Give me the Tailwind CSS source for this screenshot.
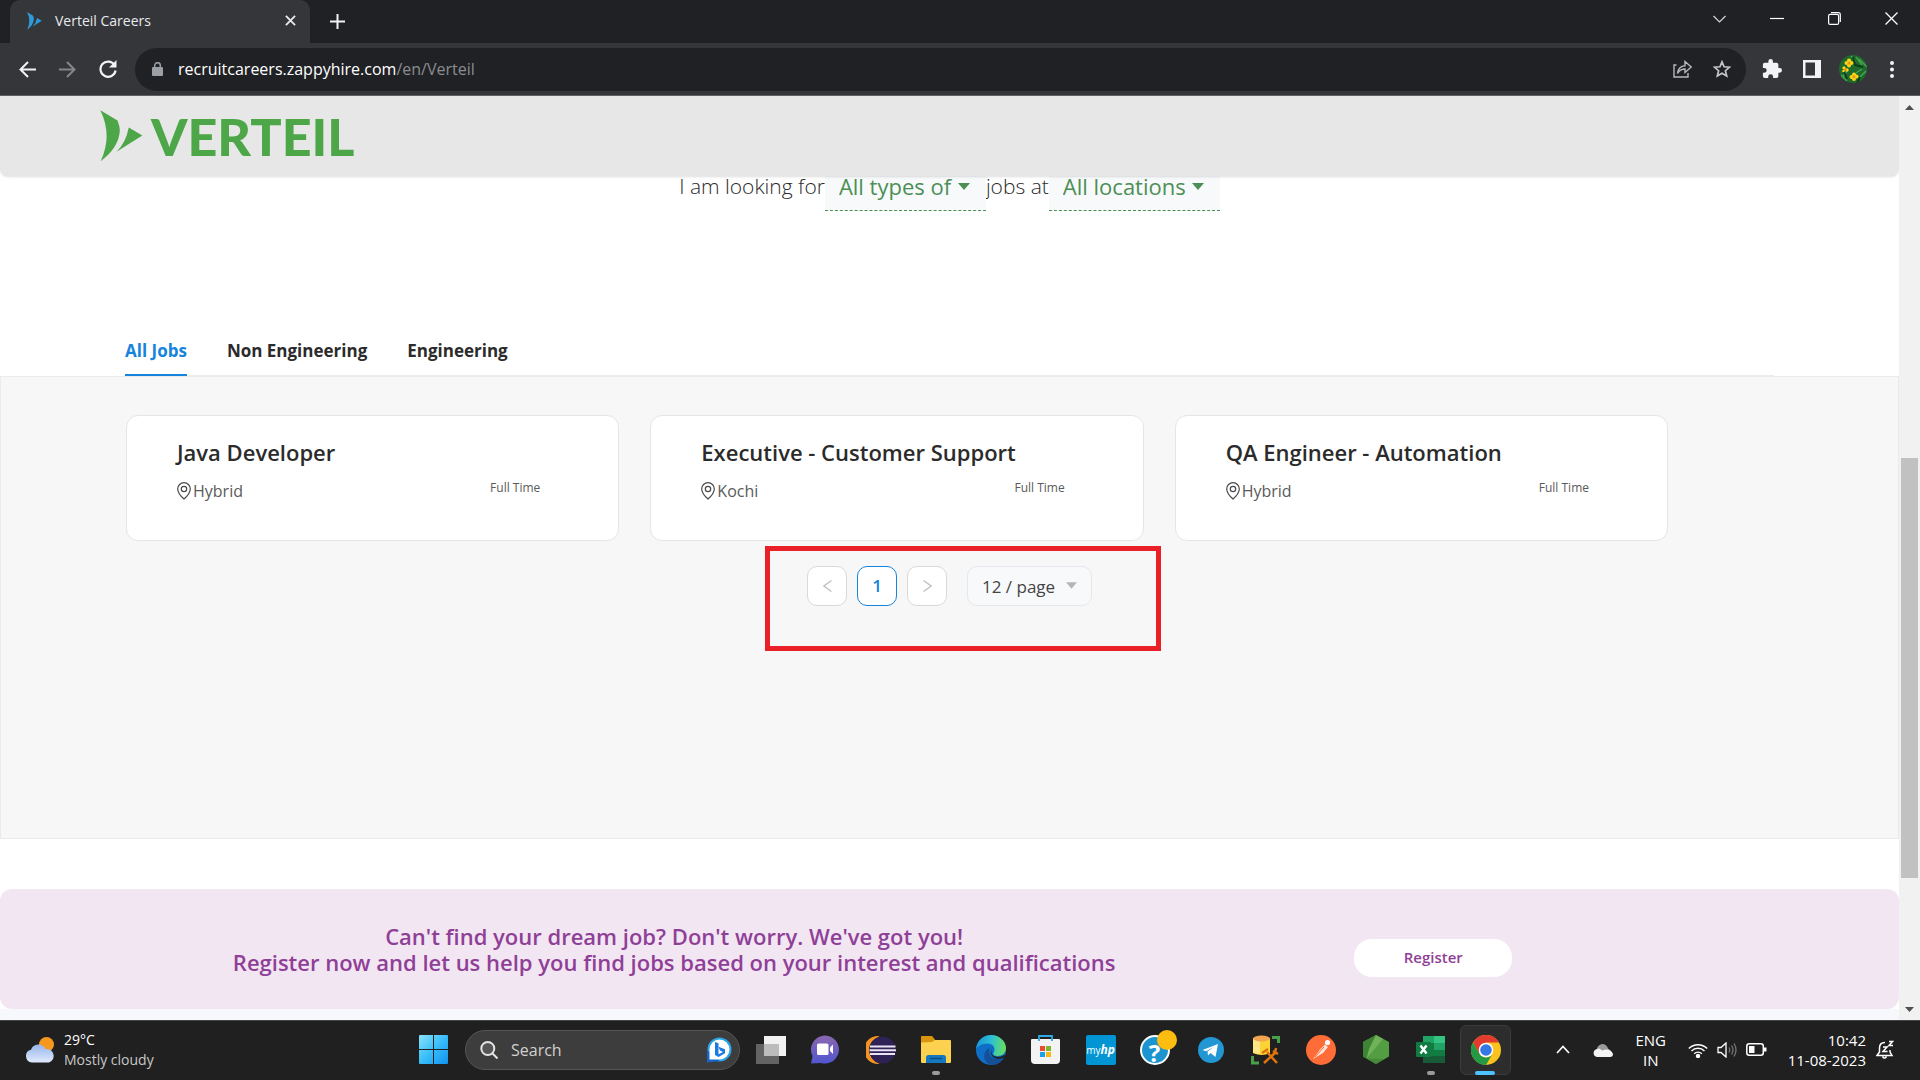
<!DOCTYPE html>
<html lang="en">
<head>
<meta charset="utf-8">
<meta name="viewport" content="width=device-width, initial-scale=1">
<title>Verteil Careers</title>
<script src="https://cdn.jsdelivr.net/npm/@tailwindcss/browser@4"></script>
</head>
<body class="flex h-screen flex-col overflow-hidden bg-white font-['Open_Sans','Noto_Sans',sans-serif] text-[#2b2b2b]">

<!-- Browser chrome -->
<div class="flex h-[43px] shrink-0 items-end bg-[#202124] pl-[10px]">
  <div class="relative flex h-[43px] w-[300px] items-center rounded-t-[10px] bg-[#35363a] pr-[12px] pb-[2px] pl-[17px]">
    <svg class="h-[18px] w-[15px] shrink-0" viewBox="300 330 130 157" preserveAspectRatio="none" fill="#2d9bdb"><path d="M301 331 353 362Q360 380 360 392C358 430 335 460 302 485Q320 445 320 410 320 370 301 331Z"/><path d="M387 383 428 407 350 456Q378 430 387 383Z"/></svg>
    <span class="ml-[13px] flex-1 text-sm text-[#e8eaed]">Verteil Careers</span>
    <button aria-label="Close tab" class="grid size-4 place-items-center"><svg class="size-[11px]" viewBox="0 0 12 12" stroke="#e8eaed" stroke-width="2"><path d="M1 1l10 10M11 1 1 11"/></svg></button>
  </div>
  <button aria-label="New tab" class="ml-5 grid h-[43px] w-[15px] place-items-center"><svg class="size-[15px]" viewBox="0 0 15 15" stroke="#f1f3f4" stroke-width="2"><path d="M7.500 0v15M0 7.500h15"/></svg></button>
  <div class="ml-auto flex h-[37px] items-center gap-11 self-start pr-[22px]">
    <button aria-label="Search tabs"><svg class="h-[8px] w-[13px]" viewBox="0 0 13 8" fill="none" stroke="#d5d6d8" stroke-width="1.200"><path d="m.5 1 6 6 6-6"/></svg></button>
    <button aria-label="Minimize"><svg class="h-[13px] w-[14px]" viewBox="0 0 14 13" stroke="#fff" stroke-width="1.200"><path d="M0 6.500h14"/></svg></button>
    <button aria-label="Restore"><svg class="size-[13px]" viewBox="0 0 13 13" fill="none" stroke="#fff" stroke-width="1.200"><rect x=".6" y="2.400" width="10" height="10" rx="1.500"/><path d="M3 .7h7.300a2 2 0 0 1 2 2V10"/></svg></button>
    <button aria-label="Close"><svg class="size-[13px]" viewBox="0 0 13 13" stroke="#fff" stroke-width="1.300"><path d="m.5.5 12 12M12.500.5l-12 12"/></svg></button>
  </div>
</div>
<div class="flex h-[53px] shrink-0 items-center border-b border-[#5f6063] bg-[#35363a] pr-[26px] pl-[19px]">
  <button aria-label="Back"><svg class="size-[17px]" viewBox="0 0 17 17" fill="none" stroke="#f1f3f4" stroke-width="2"><path d="M17 8.500H2M9 1 1.500 8.500 9 16"/></svg></button>
  <button aria-label="Forward" class="ml-[23px]"><svg class="size-[17px]" viewBox="0 0 17 17" fill="none" stroke="#85868a" stroke-width="2"><path d="M0 8.500h15M8 1l7.500 7.500L8 16"/></svg></button>
  <button aria-label="Reload" class="ml-[23px]"><svg class="size-[18px]" viewBox="0 0 18 18" fill="none" stroke="#f1f3f4" stroke-width="2.200"><path d="M15.500 5A7.600 7.600 0 1 0 16.600 10.500"/><path d="M17.500 0v7.500H10z" fill="#f1f3f4" stroke="none"/></svg></button>
  <div class="ml-[18px] flex h-[43px] flex-1 items-center rounded-full bg-[#202124] pr-[15px] pl-[17px]">
    <svg class="h-[14px] w-[11px]" viewBox="0 0 11 14"><rect y="5" width="11" height="9" rx="1" fill="#9aa0a6"/><path d="M2.700 6V3.500a2.800 2.800 0 0 1 5.600 0V6" fill="none" stroke="#9aa0a6" stroke-width="1.500"/></svg>
    <a href="#" class="ml-[15px] flex-1 text-base text-white">recruitcareers.zappyhire.com<span class="text-[#8b8d91]">/en/Verteil</span></a>
    <button aria-label="Share"><svg class="h-[18px] w-[19px]" viewBox="0 0 19 18" fill="none" stroke="#b6b8bb" stroke-width="1.400"><path d="M3.500 5H1v12h14v-4M4.500 13.500C5 8.500 8 6 12 5.700V1.500l6.200 5.500L12 12.500V9C9 9 6.500 10 4.500 13.500Z"/></svg></button>
    <button aria-label="Bookmark" class="ml-[21px]"><svg class="size-[18px]" viewBox="0 0 18 18" fill="none" stroke="#c4c6c9" stroke-width="1.700"><path d="m9 1.800 2.100 5 5.400.4-4.100 3.500 1.300 5.300L9 13.200 4.300 16l1.300-5.300L1.500 7.200l5.400-.4z"/></svg></button>
  </div>
  <div class="ml-4 flex items-center">
    <button aria-label="Extensions"><svg class="size-[20px]" viewBox="1 1 22 22" fill="#f1f3f4"><path d="M20.500 11H19V7a2 2 0 0 0-2-2h-4V3.500a2.500 2.500 0 0 0-5 0V5H4a2 2 0 0 0-2 2v3.800h1.500a2.700 2.700 0 0 1 0 5.400H2V20a2 2 0 0 0 2 2h3.800v-1.500a2.700 2.700 0 0 1 5.400 0V22H17a2 2 0 0 0 2-2v-4h1.500a2.500 2.500 0 0 0 0-5z"/></svg></button>
    <button aria-label="Side panel" class="ml-[21px]"><svg class="size-[18px]" viewBox="0 0 18 18"><path fill="#f1f3f4" fill-rule="evenodd" d="M0 0h18v18H0zM2.500 2.500v13H12v-13z"/></svg></button>
    <button aria-label="Profile" class="ml-[18px]"><svg class="size-[28px]" viewBox="0 0 28 28"><defs><clipPath id="av"><circle cx="14" cy="14" r="14"/></clipPath></defs><g clip-path="url(#av)"><path fill="#1d6a2b" d="M0 0h28v28H0z"/><path stroke="#49a152" stroke-width="1.500" d="m2 20 6 6M17 2l6 8M20 4l8 8M4 22l5-8M23 14l-6 4M12 1l4 5M19 24l8-8"/><path stroke="#0d3d19" stroke-width="2" d="m16 10 8 2M4 14l4 10M18 28l3-6M14 2l2 8"/><g fill="#fbd51b"><circle cx="10" cy="5.500" r="2"/><circle cx="7.500" cy="8" r="2"/><circle cx="12.500" cy="8" r="2"/><circle cx="10" cy="10.500" r="2"/><circle cx="5" cy="13" r="1.700"/><circle cx="8" cy="15" r="1.700"/><circle cx="4.500" cy="16" r="1.300"/><circle cx="15" cy="19.500" r="2"/><circle cx="17.500" cy="21.500" r="2"/><circle cx="12.500" cy="22" r="2"/><circle cx="15" cy="24" r="2"/></g><g fill="#e39a10"><circle cx="10" cy="8" r="1.500"/><circle cx="6.500" cy="14.500" r="1.200"/><circle cx="15" cy="21.700" r="1.500"/></g></g></svg></button>
    <button aria-label="Menu" class="ml-[23px]"><svg class="h-[17px] w-[4px]" viewBox="0 0 4 17" fill="#f1f3f4"><circle cx="2" cy="2" r="2"/><circle cx="2" cy="8.500" r="2"/><circle cx="2" cy="15" r="2"/></svg></button>
  </div>
</div>

<!-- Page viewport -->
<div class="flex min-h-0 flex-1">
  <div class="flex min-w-0 flex-1 flex-col overflow-hidden">
    <header class="relative z-10 flex h-20 shrink-0 items-center rounded-b-lg bg-[#e7e7e7] pl-[100px] shadow-sm">
      <a href="#" class="flex items-center text-[#4da748]">
        <svg class="h-[52px] w-[43px]" viewBox="300 330 130 157" fill="currentColor"><path d="M301 331 353 362Q360 380 360 392C358 430 335 460 302 485Q320 445 320 410 320 370 301 331Z"/><path d="M387 383 428 407 350 456Q378 430 387 383Z"/></svg>
        <span class="ml-2 font-['Lato',sans-serif] text-[52px] leading-[52px] font-black">VERTEIL</span>
      </a>
    </header>

    <main class="flex flex-1 flex-col">
      <form class="-mt-[13px] flex h-12 shrink-0 items-center justify-center text-[22px] font-light">
        <label for="type" class="text-[21px]">I am looking for</label>
        <span class="relative h-12 w-[161px]">
          <select id="type" class="h-12 w-full appearance-none border-b border-dashed border-[#4b8f55] bg-[#f8f9fb] pl-[14px] font-normal text-[#4b8f55]"><option>All types of</option></select>
          <svg class="pointer-events-none absolute top-5 right-4 h-[7px] w-[12px]" viewBox="0 0 12 7" fill="#4b8f55"><path d="M0 0h12L6 7z"/></svg>
        </span>
        <label for="loc" class="text-[21px]">jobs at</label>
        <span class="relative h-12 w-[171px]">
          <select id="loc" class="h-12 w-full appearance-none border-b border-dashed border-[#4b8f55] bg-[#f8f9fb] pl-[14px] font-normal text-[#4b8f55]"><option>All locations</option></select>
          <svg class="pointer-events-none absolute top-5 right-4 h-[7px] w-[12px]" viewBox="0 0 12 7" fill="#4b8f55"><path d="M0 0h12L6 7z"/></svg>
        </span>
      </form>

      <nav class="mt-[115px] mr-[125px] ml-[125px] flex h-[50px] shrink-0 gap-10 border-b border-[#ececec] text-[17px] font-bold">
        <a href="#" class="h-[50px] border-b-2 border-[#1683dd] leading-[49px] text-[#1683dd]">All Jobs</a>
        <a href="#" class="leading-[49px]">Non Engineering</a>
        <a href="#" class="leading-[49px]">Engineering</a>
      </nav>

      <section class="shrink-0 border border-[#ebebeb] bg-[#f7f7f7] pb-[232px]">
        <div class="grid grid-cols-3 gap-[31px] pt-[38px] pr-[230px] pl-[125px]">
          <article class="h-[126px] rounded-xl border border-[#e5e5e5] bg-white pt-5 pr-[78px] pl-[50px]">
            <h2 class="text-[22px] leading-8 font-semibold whitespace-nowrap">Java Developer</h2>
            <div class="mt-[11px] flex items-start justify-between text-[#5a5a5a]">
              <p class="flex items-center gap-[2px] text-base leading-6"><svg class="h-[18px] w-[14px]" viewBox="0 0 14 18" fill="none" stroke="#4a4a4a" stroke-width="1.200"><path d="M7 17Q.7 11.500.7 7a6.300 6.300 0 0 1 12.600 0Q13.300 11.500 7 17Z"/><circle cx="7" cy="7" r="2.700"/></svg>Hybrid</p>
              <p class="text-xs leading-[18px]">Full Time</p>
            </div>
          </article>
          <article class="h-[126px] rounded-xl border border-[#e5e5e5] bg-white pt-5 pr-[78px] pl-[50px]">
            <h2 class="text-[22px] leading-8 font-semibold whitespace-nowrap">Executive - Customer Support</h2>
            <div class="mt-[11px] flex items-start justify-between text-[#5a5a5a]">
              <p class="flex items-center gap-[2px] text-base leading-6"><svg class="h-[18px] w-[14px]" viewBox="0 0 14 18" fill="none" stroke="#4a4a4a" stroke-width="1.200"><path d="M7 17Q.7 11.500.7 7a6.300 6.300 0 0 1 12.600 0Q13.300 11.500 7 17Z"/><circle cx="7" cy="7" r="2.700"/></svg>Kochi</p>
              <p class="text-xs leading-[18px]">Full Time</p>
            </div>
          </article>
          <article class="h-[126px] rounded-xl border border-[#e5e5e5] bg-white pt-5 pr-[78px] pl-[50px]">
            <h2 class="text-[22px] leading-8 font-semibold whitespace-nowrap">QA Engineer - Automation</h2>
            <div class="mt-[11px] flex items-start justify-between text-[#5a5a5a]">
              <p class="flex items-center gap-[2px] text-base leading-6"><svg class="h-[18px] w-[14px]" viewBox="0 0 14 18" fill="none" stroke="#4a4a4a" stroke-width="1.200"><path d="M7 17Q.7 11.500.7 7a6.300 6.300 0 0 1 12.600 0Q13.300 11.500 7 17Z"/><circle cx="7" cy="7" r="2.700"/></svg>Hybrid</p>
              <p class="text-xs leading-[18px]">Full Time</p>
            </div>
          </article>
        </div>

        <div class="mt-[25px] flex justify-center">
          <div class="relative flex gap-[10px]">
            <!-- highlight frame around the pager -->
            <div class="pointer-events-none absolute -top-5 -left-[42px] h-[105px] w-[396px] border-5 border-[#e92028]"></div>
            <button aria-label="Previous page" class="grid size-10 place-items-center rounded-[10px] border border-[#d9d9d9] bg-white"><svg class="h-[12px] w-[9px]" viewBox="0 0 9 12" fill="none" stroke="#bdbdbd" stroke-width="1.200"><path d="M8.500.5.800 6l7.700 5.500"/></svg></button>
            <button class="size-10 rounded-[10px] border border-[#1683dd] bg-white text-[17px] font-semibold text-[#1683dd]">1</button>
            <button aria-label="Next page" class="grid size-10 place-items-center rounded-[10px] border border-[#d9d9d9] bg-white"><svg class="h-[12px] w-[9px]" viewBox="0 0 9 12" fill="none" stroke="#bdbdbd" stroke-width="1.200"><path d="M.5.500 8.200 6 .5 11.500"/></svg></button>
            <span class="relative ml-[10px]">
              <select aria-label="Page size" class="h-10 w-[125px] appearance-none rounded-[10px] border border-[#e4e7eb] bg-[#f8f9fb] pt-[2px] pl-[14px] text-[17px] text-[#444]"><option>12 / page</option></select>
              <svg class="pointer-events-none absolute top-4 right-[15px] h-[7px] w-[11px]" viewBox="0 0 12 7" fill="#b5b5b5"><path d="M0 0h12L6 7z"/></svg>
            </span>
          </div>
        </div>
      </section>

      <section class="mt-[50px] flex h-[120px] shrink-0 items-center rounded-xl bg-[#f2e6f2]">
        <p class="w-[71%] text-center text-[22px] leading-[26px] font-semibold text-[#8f3f97]">Can't find your dream job? Don't worry. We've got you!<br>Register now and let us help you find jobs based on your interest and qualifications</p>
        <button class="mt-[18px] ml-[6px] h-[38px] w-[158px] rounded-[18px] bg-white pb-[2px] text-[15px] font-semibold text-[#8f3f97]">Register</button>
      </section>
      <div class="flex-1 bg-[#f6f8fb]"></div>
    </main>
  </div>

  <!-- Scrollbar -->
  <div class="flex w-[21px] shrink-0 flex-col items-center bg-[#f1f1f1] pt-[9px] pb-[8px]">
    <svg class="h-[5px] w-[9px]" viewBox="0 0 9 5" fill="#505050"><path d="M0 5h9L4.500 0z"/></svg>
    <div class="mt-[348px] h-[420px] w-[17px] bg-[#c1c1c1]"></div>
    <svg class="mt-auto h-[5px] w-[9px]" viewBox="0 0 9 5" fill="#505050"><path d="M0 0h9L4.500 5z"/></svg>
  </div>
</div>

<!-- Taskbar -->
<footer class="grid h-[60px] shrink-0 grid-cols-[1fr_auto_1fr] items-center border-t border-[#444] bg-[#202020] pb-[2px] text-[15px] leading-5 text-white">
  <button class="flex items-center gap-[9px] pl-[25px] text-left">
    <svg class="h-[26px] w-[30px]" viewBox="0 0 30 26"><defs><linearGradient id="cl" x1="0" y1="0" x2="0" y2="1"><stop offset="0" stop-color="#98b4ec"/><stop offset="1" stop-color="#dfeafc"/></linearGradient></defs><circle cx="21.500" cy="7.500" r="7.500" fill="#f5981d"/><path fill="url(#cl)" d="M7 25.500a6.500 6.500 0 0 1-1-12.800A7.800 7.800 0 0 1 20.500 12 7 7 0 0 1 24 25.500z"/></svg>
    <span class="text-sm leading-5">29°C<br><span class="text-[#c8c8c8]">Mostly cloudy</span></span>
  </button>

  <div class="flex items-center pr-[2px]">
    <button aria-label="Start" class="grid h-12 w-[52px] place-items-center pl-1"><svg class="size-[29px]" viewBox="0 0 29 29"><defs><linearGradient id="wn" x1="0" y1="0" x2="1" y2="1"><stop offset="0" stop-color="#8be3fb"/><stop offset=".5" stop-color="#38bdf8"/><stop offset="1" stop-color="#1093ee"/></linearGradient></defs><path fill="url(#wn)" d="M1 0h13v14H0V1q0-1 1-1zm14 0h13q1 0 1 1v13H15zM0 15h14v14H1q-1 0-1-1zm15 0h14v13q0 1-1 1H15z"/></svg></button>
    <label class="ml-2 flex h-10 w-[275px] items-center rounded-full border border-[#555] bg-[#3d3d3d] pr-[7px] pl-[14px]">
      <svg class="size-[18px] shrink-0" viewBox="0 0 18 18" fill="#555" stroke="#e4e4e4" stroke-width="2"><circle cx="7.800" cy="7.500" r="6.500"/><path d="m12.500 12.500 5 5"/></svg>
      <input type="search" placeholder="Search" aria-label="Search" class="ml-[13px] w-0 flex-1 bg-transparent text-base placeholder:text-[#d0d0d0]">
      <svg class="size-[26px]" viewBox="0 0 26 26"><circle cx="13.500" cy="12.500" r="12" fill="#2aa5ea"/><path fill="#1765c9" d="M1 25.500V13l13 11z"/><path fill="#fff" d="M3.500 22.500v-10a10 10 0 1 1 10 10z"/><path fill="#1f79de" d="m9 5 3.500 1.300v11L17 15l-3-1.500-1.500-3.800 6.500 2.500v4L12.500 20 9 18z"/></svg>
    </label>
    <div class="ml-[3px] flex items-center">
      <button aria-label="Task view" class="grid h-12 w-[55px] place-items-center"><svg class="h-[28px] w-[30px]" viewBox="0 0 30 28"><path fill="#636363" d="M0 8h23v20H0z"/><path fill="#f2f2f2" d="M8 0h22v20H8z"/><path fill="#bcbcbc" d="M8 8h15v12H8z"/></svg></button>
      <button aria-label="Chat" class="grid h-12 w-[55px] place-items-center"><svg class="size-[29px]" viewBox="0 0 29 29"><defs><linearGradient id="ch" x1="0" y1="0" x2="0" y2="1"><stop stop-color="#8b67b0"/><stop offset="1" stop-color="#5056cf"/></linearGradient></defs><path fill="url(#ch)" d="M0 28.500 1.500 21A14 14 0 1 1 10 28z"/><rect x="6" y="8.500" width="11.500" height="11.500" rx="1.500" fill="#fff"/><path fill="#fff" d="m19 12.500 3-3v9.500l-3-3z"/></svg></button>
      <button aria-label="Eclipse" class="grid h-12 w-[55px] place-items-center"><svg class="h-[28px] w-[30px]" viewBox="0 0 30 28"><path fill="#f39422" d="M12 0a14 14 0 0 0 0 28l1.500-.5a14 14 0 0 1 0-27z"/><circle cx="16.500" cy="14" r="13.300" fill="#2f2257"/><path stroke="#e9e4f3" stroke-width="2" d="M4 10.500h25.500M3.500 14.200h26.500M4 17.900h25"/></svg></button>
      <button aria-label="File Explorer" class="relative grid h-12 w-[55px] place-items-center"><svg class="h-[27px] w-[30px]" viewBox="0 0 30 27"><path fill="#d8960f" d="M0 1q0-1 1-1h10l3 3.500V9H0z"/><path fill="#fdd150" d="M0 6.500 11 6l3-2h15q1 0 1 1v21q0 1-1 1H1q-1 0-1-1z"/><path fill="#1478bf" d="M5 27v-5.500q0-2.500 2.500-2.500h15q2.500 0 2.500 2.500V27z"/><path stroke="#0b4d86" stroke-width="1.500" d="M9 22.500h12"/></svg><span class="absolute -bottom-px left-6 h-1 w-2 rounded-full bg-[#9a9a9a]"></span></button>
      <button aria-label="Edge" class="grid h-12 w-[55px] place-items-center"><svg class="size-[30px]" viewBox="0 0 30 30"><defs><linearGradient id="eg" x1="0" y1=".3" x2="1" y2=".4"><stop stop-color="#1c93db"/><stop offset=".5" stop-color="#2cc0d3"/><stop offset="1" stop-color="#6ade5c"/></linearGradient></defs><circle cx="15" cy="15" r="15" fill="#0f6fc8"/><path fill="url(#eg)" d="M0 14C1 5 8 0 15 0c8 0 15 6 15 13 0 5-4 8-8 8-4 0-5.500-1.500-4.500-3C20 14 18 8.500 11.500 8.500 5.500 8.500 1 12 0 14z"/><path fill="#144f97" d="M28.500 22A15 15 0 0 1 17 30c-6-.5-10-5-8.500-11 .7-2.800 2.500-5 5-6-2 6.500 3 12 9.500 11 2.500-.3 4-1.200 5.500-2z"/><path fill="#202020" d="M17 12.500c-2.500 1.500-2.500 7 1.500 8.700 3 1.300 7 .8 9.500-1.200 1 0 1.500.7.800 2-3 2.500-10.800 3-13.300-2-1.500-3.500 0-6.500 1.500-7.500z"/></svg></button>
      <button aria-label="Microsoft Store" class="grid h-12 w-[55px] place-items-center"><svg class="size-[29px]" viewBox="0 0 29 29"><path fill="#f3f3f3" d="M0 5q0-1 1-1h27q1 0 1 1v20q0 4-4 4H4q-4 0-4-4z"/><path fill="none" stroke="#2ea9e4" stroke-width="1.800" d="M8 6V1h13v5"/><path fill="#ea4e2c" d="M9 11h5v5H9z"/><path fill="#7db72f" d="M15 11h5v5h-5z"/><path fill="#1fa2e5" d="M9 17h5v5H9z"/><path fill="#fdb713" d="M15 17h5v5h-5z"/></svg></button>
      <button aria-label="myHP" class="grid h-12 w-[55px] place-items-center"><span class="flex size-[30px] items-center justify-center rounded-xs bg-[#0295d4] text-[10px]">my<b class="text-xs italic">hp</b></span></button>
      <button aria-label="Help" class="relative grid h-12 w-[55px] place-items-center pr-[2px]"><span class="grid size-[30px] place-items-center rounded-full border-2 border-white bg-[#1b94cf] text-2xl font-bold">?</span><span class="absolute top-[4px] right-[6px] size-[20px] rounded-full bg-[#fdbc10]"></span></button>
      <button aria-label="Telegram" class="grid h-12 w-[55px] place-items-center"><svg class="size-[26px]" viewBox="0 0 26 26"><circle cx="13" cy="13" r="13" fill="#2397d3"/><path fill="#fff" d="M4.500 13 20 7l-2.500 13-5-4-2.500 2.500-.5-4L16 10l-8 4.200z"/></svg></button>
      <button aria-label="SQL Developer" class="grid h-12 w-[55px] place-items-center"><svg class="h-[30px] w-[29px]" viewBox="0 0 29 30"><path fill="#fbd335" d="M2 3h17v15q-8 4-17 0z"/><path fill="#fde884" d="M2 4h7v15l-7-1z"/><ellipse cx="10.500" cy="3.500" rx="8.500" ry="3" fill="#f0a552"/><path fill="none" stroke="#48a04a" stroke-width="3" d="M21 2.500h6.500V8M1.500 21v7H8"/><path stroke="#e0740f" stroke-width="2.500" d="m13 28 12-11M16 17l10 11M11 18l6-4M22 16l5 3M25 13l-1 5"/></svg></button>
      <button aria-label="Postman" class="grid h-12 w-[55px] place-items-center"><svg class="size-[30px]" viewBox="0 0 30 30"><circle cx="15" cy="15" r="15" fill="#ff6c37"/><circle cx="21.500" cy="7.500" r="2.600" fill="#fff"/><path fill="#ffe4d9" d="M19 9.500 22 12l-5 6-10 6 7-9.500z"/><path stroke="#ff6c37" d="m9 22 9-10"/></svg></button>
      <button aria-label="Node" class="grid h-12 w-[55px] place-items-center"><svg class="h-[29px] w-[26px]" viewBox="0 0 26 29"><path fill="#539e43" d="m13 0 13 7v14.500L13 29 0 21.500V7z"/><path fill="#3f8335" d="M0 7v14.500l3.500 2L13 0z"/><path fill="#6fb257" d="M3.500 23.500 20 4l-7-4L6 14z"/><path fill="#458b39" d="m3.500 23.500 9.500 5.500 8-5z"/></svg></button>
      <button aria-label="Excel" class="relative grid h-12 w-[55px] place-items-center"><svg class="h-[27px] w-[29px]" viewBox="0 0 29 27"><path fill="#21a366" d="M7 0h11v7H7z"/><path fill="#33c481" d="M18 0h11v7H18z"/><path fill="#107c41" d="M7 7h11v13H7z"/><path fill="#21a366" d="M18 7h11v7H18z"/><path fill="#107c41" d="M18 14h11v6H18z"/><path fill="#185c37" d="M7 20h22v7H7z"/><rect y="6" width="15" height="15" rx="1" fill="#107c41"/><path stroke="#fff" stroke-width="2.400" d="m4.500 9.500 6 8M10.500 9.500l-6 8"/></svg><span class="absolute -bottom-px left-6 h-1 w-2 rounded-full bg-[#9a9a9a]"></span></button>
      <button aria-label="Chrome" class="relative grid h-12 w-[55px] place-items-center"><span class="absolute inset-x-[2px] -inset-y-px rounded-md border border-[#3b3b3b] bg-[#2d2d2d]"></span><svg class="relative size-[30px]" viewBox="0 0 30 30"><circle cx="15" cy="15" r="15" fill="#fcc31e"/><path fill="#e33b2e" d="M2 7.500a15 15 0 0 1 26 0H15L8.500 19z"/><path fill="#249a47" d="M2 7.500a15 15 0 0 0 13 22.500l6.500-11.200a7.500 7.500 0 0 1-13 0z"/><circle cx="15" cy="15" r="7.300" fill="#fff"/><circle cx="15" cy="15" r="5.800" fill="#3578e5"/></svg><span class="absolute -bottom-px left-[17px] h-1 w-5 rounded-full bg-[#4cc2ff]"></span></button>
    </div>
  </div>

  <div class="flex items-center justify-end pr-[26px]">
    <button aria-label="Hidden icons"><svg class="h-[9px] w-[14px]" viewBox="0 0 14 9" fill="none" stroke="#fff" stroke-width="1.700"><path d="m1 8 6-6.500L13 8"/></svg></button>
    <svg class="ml-[23px] h-[14px] w-[20px]" viewBox="0 0 20 14"><path fill="#9b9b9b" d="M4 8a5.500 5.500 0 0 1 11-2.500L18 8z"/><path fill="#f3f3f3" d="M4 14a4 4 0 0 1-.5-7.800Q6 4.500 9 7.500l4-1q5-.5 7 4.500 0 3-3 3z"/></svg>
    <button class="ml-[22px] w-[32px] text-center">ENG<br>IN</button>
    <button aria-label="Network, sound and battery" class="ml-[21px] flex items-center gap-[9px]">
      <svg class="h-[16px] w-[20px]" viewBox="0 0 20 16" fill="none" stroke="#fff" stroke-width="1.400"><path d="M.8 6.500a13 13 0 0 1 18.400 0M3.500 9a9.200 9.200 0 0 1 13 0M6.200 11.700a5.400 5.400 0 0 1 7.600 0"/><circle cx="10" cy="14" r="1.500" fill="#fff"/></svg>
      <svg class="h-[16px] w-[20px]" viewBox="0 0 20 16" fill="none" stroke="#fff" stroke-width="1.300"><path d="M1 5.500h3L9 1v14l-5-4.500H1z"/><path stroke="#777" d="M12 5.500q1.500 2.500 0 5M14.500 3.500q3 4.500 0 9M17 1.500q4 6.500 0 13"/></svg>
      <svg class="h-[13px] w-[21px]" viewBox="0 0 21 13"><rect x=".8" y=".8" width="16.500" height="11.400" rx="2.500" fill="none" stroke="#fff" stroke-width="1.500"/><path fill="#fff" d="M3 3h5.500v7H3zM18 4.500h2.500v4H18z"/></svg>
    </button>
    <button class="ml-[21px] text-right">10:42<br>11-08-2023</button>
    <button aria-label="Notifications" class="ml-[10px]"><svg class="h-[19px] w-[18px]" viewBox="0 0 18 19" fill="none" stroke="#fff" stroke-width="1.500"><path d="M9 2.500q-5.500 0-5.500 5.500v4L1 15.500h15L14 12v-2M6.500 16.500q2 3 4 0M7 7h4l-4 4.500h4.500M13 1.500h3.500l-3.500 4h4"/></svg></button>
  </div>
</footer>
</body>
</html>
